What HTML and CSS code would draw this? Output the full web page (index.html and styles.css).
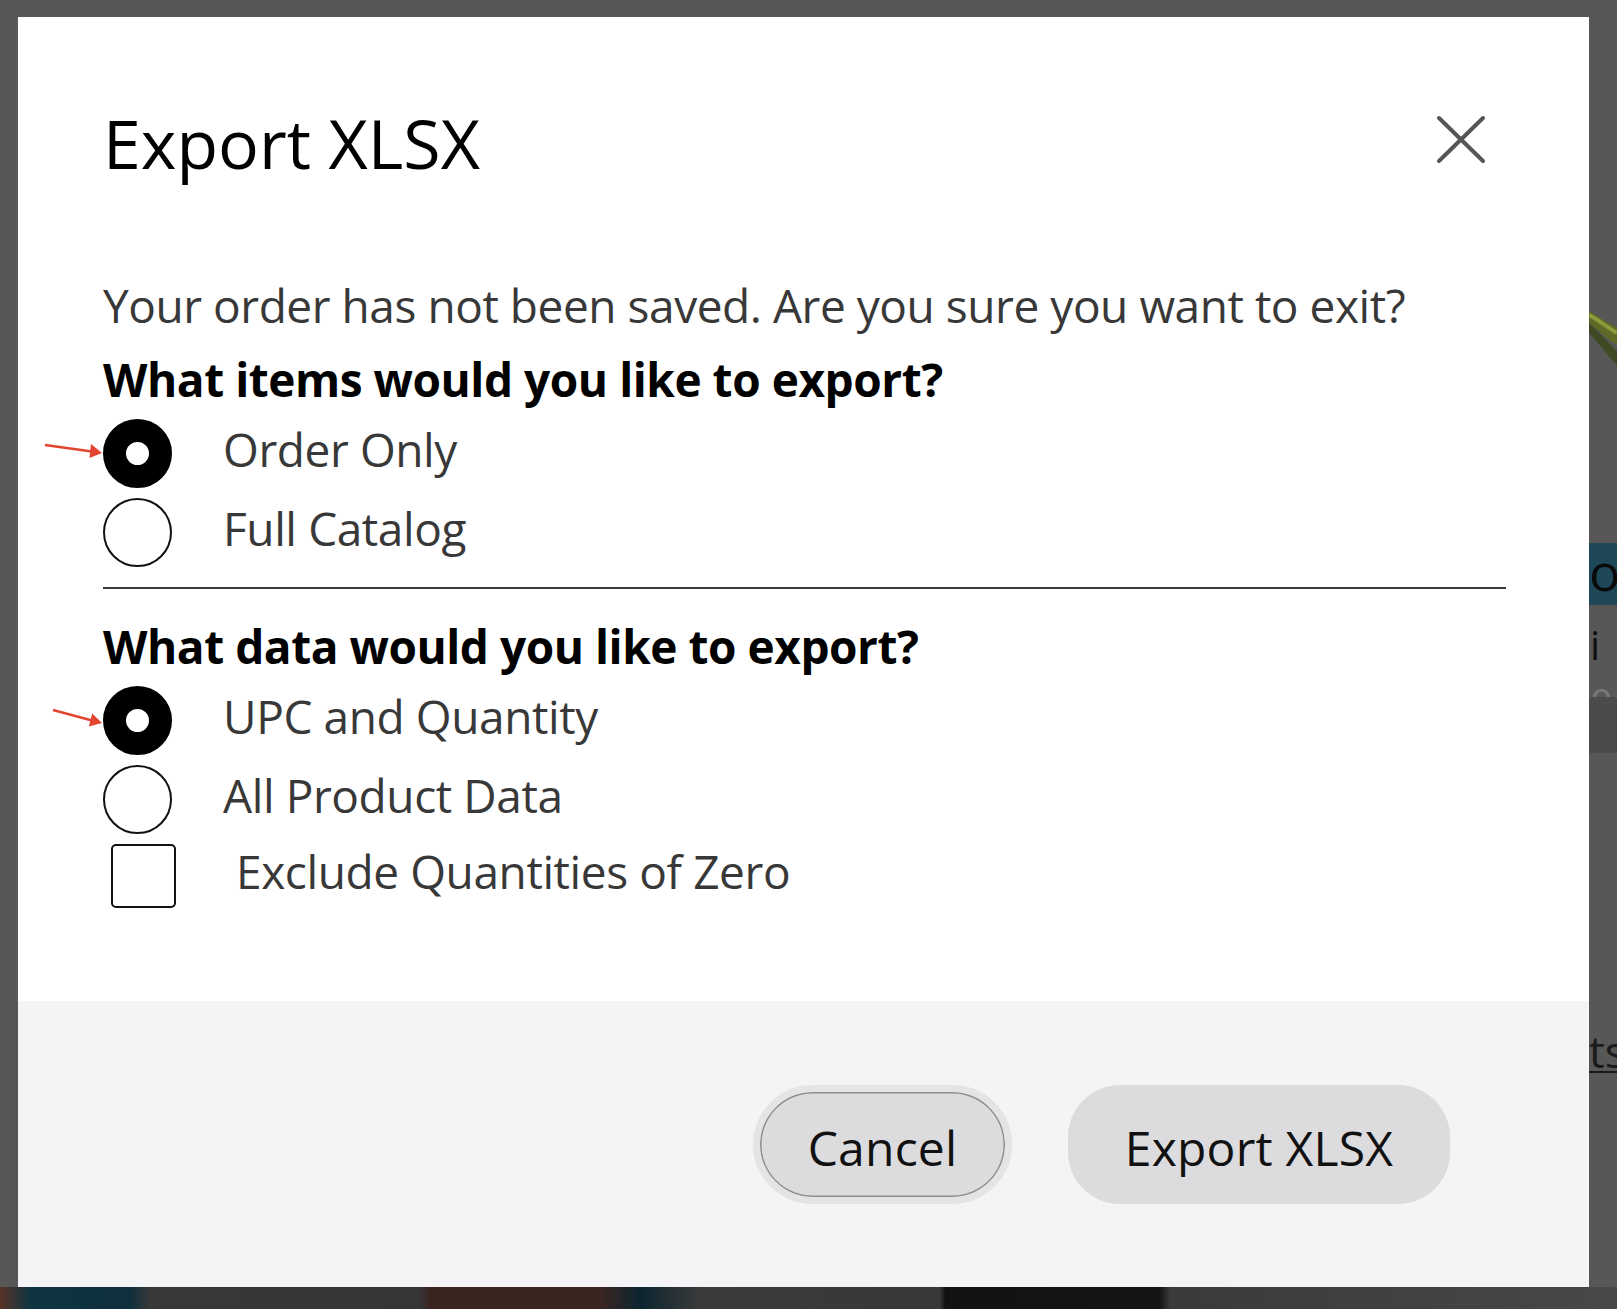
FILE: index.html
```html
<!DOCTYPE html>
<html lang="en">
<head>
<meta charset="utf-8">
<title>Export XLSX</title>
<link rel="stylesheet" href="styles.css">
</head>
<body>
<div class="screen">
  <div class="dialog">
    <div class="dialog-main">
      <div class="header">
        <h1 class="title">Export XLSX</h1>
        <button class="close" aria-label="Close">
          <svg width="52" height="52" viewBox="0 0 52 52"><path d="M4 4 L48 47 M48 4 L4 47" stroke="#555" stroke-width="4" stroke-linecap="round" fill="none"/></svg>
        </button>
      </div>
      <p class="message">Your order has not been saved. Are you sure you want to exit?</p>
      <h2 class="question">What items would you like to export?</h2>
      <div class="option"><span class="radio checked"></span><span class="label">Order Only</span></div>
      <div class="option"><span class="radio"></span><span class="label">Full Catalog</span></div>
      <hr class="divider">
      <h2 class="question q2">What data would you like to export?</h2>
      <div class="option"><span class="radio checked"></span><span class="label">UPC and Quantity</span></div>
      <div class="option"><span class="radio"></span><span class="label">All Product Data</span></div>
      <div class="option option-cb"><span class="checkbox"></span><span class="label cb-label">Exclude Quantities of Zero</span></div>
    </div>
    <div class="footer">
      <button class="btn btn-cancel">Cancel</button>
      <button class="btn btn-export">Export XLSX</button>
    </div>
  </div>
  <div class="edge">
    <svg class="leaf" width="28" height="90" viewBox="0 0 28 90"><path d="M0 6 C8 10 18 18 28 22 L28 40 C18 34 8 24 0 18 Z" fill="#5c6a26"/><path d="M0 10 C8 14 18 22 28 28" stroke="#8c9a3c" stroke-width="4" fill="none"/><path d="M0 18 C8 26 18 36 28 46 L28 60 C18 50 8 36 0 28 Z" fill="#3f4a24"/></svg>
    <div class="band">o</div>
    <div class="frag">i</div>
    <div class="frag faint">0(</div>
    <div class="dark-band"></div>
    <div class="link">ts</div>
  </div>
</div>
<svg class="arrows" width="120" height="760" viewBox="0 0 120 760">
  <path d="M45 445 L92 451.5" stroke="#e2452f" stroke-width="2.5" fill="none"/>
  <path d="M102 453 L89.5 458 L91 444 Z" fill="#e2452f"/>
  <path d="M53 710 L92 720.5" stroke="#e2452f" stroke-width="2.5" fill="none"/>
  <path d="M102 723 L88.9 726.5 L92.2 713.5 Z" fill="#e2452f"/>
</svg>
</body>
</html>
```
FILE: styles.css
```css
html, body {
  margin: 0;
  padding: 0;
}
body {
  width: 1617px;
  height: 1309px;
  overflow: hidden;
  background-color: #575757;
  background-image:
    linear-gradient(to right, #5a3328 0, #0f3442 30px, #0e2f3c 130px, #383838 150px, #353535 420px, #3a2420 430px, #3b2521 600px, #0d2530 640px, #3a3a3a 700px, #383838 940px, #121212 945px, #151515 1160px, #3a3a3a 1170px, #484848 1617px);
  background-size: 1617px 22px;
  background-position: 0 1287px;
  background-repeat: no-repeat;
  font-family: "Open Sans", "Noto Sans", sans-serif;
  position: relative;
}
.screen {
  display: flex;
  align-items: flex-start;
}
.dialog {
  margin: 17px 0 0 18px;
  width: 1571px;
  height: 1270px;
  background: #ffffff;
  display: flex;
  flex-direction: column;
  flex: none;
}
.dialog-main {
  flex: 1;
  padding: 86px 83px 0 85px;
  color: #333;
}
.header {
  display: flex;
  align-items: center;
  justify-content: space-between;
  height: 80px;
}
.title {
  margin: 0;
  font-size: 68px;
  font-weight: 400;
  line-height: 80px;
  color: #000;
}
.close {
  width: 52px;
  height: 52px;
  padding: 0;
  margin: 0 19px 6px 0;
  border: 0;
  background: transparent;
  display: flex;
}
.message {
  margin: 85px 0 0;
  font-size: 46px;
  letter-spacing: -0.45px;
  line-height: 74px;
  color: #383838;
  white-space: nowrap;
}
.question {
  margin: 2px 0 0;
  font-size: 46px;
  letter-spacing: -0.45px;
  line-height: 70px;
  font-weight: 700;
  color: #000;
  white-space: nowrap;
}
.q2 {
  margin-top: 22px;
}
.option {
  display: flex;
  align-items: center;
  height: 79px;
}
.option-cb {
  margin-top: -3px;
}
.radio {
  width: 69px;
  height: 69px;
  box-sizing: border-box;
  border: 2px solid #111;
  border-radius: 50%;
  background: #fff;
  flex: none;
}
.radio.checked {
  border: 23px solid #000;
  background: #fff;
}
.checkbox {
  width: 65px;
  height: 64px;
  box-sizing: border-box;
  border: 2px solid #111;
  border-radius: 5px;
  margin-left: 8px;
  flex: none;
}
.label {
  margin-left: 51px;
  margin-bottom: 10px;
  font-size: 46px;
  letter-spacing: -0.4px;
  color: #383838;
  white-space: nowrap;
}
.cb-label {
  margin-left: 60px;
}
.divider {
  margin: 15px 0 0;
  border: 0;
  height: 2px;
  background: #3a3a3a;
}
.footer {
  height: 286px;
  background: #f4f4f6;
  display: flex;
  align-items: center;
  justify-content: flex-end;
  padding-right: 139px;
  gap: 56px;
}
.btn {
  height: 119px;
  box-sizing: border-box;
  border: 0;
  border-radius: 52px;
  background: #dcdcde;
  font-family: "Open Sans", "Noto Sans", sans-serif;
  font-size: 48px;
  letter-spacing: 0.2px;
  color: #111;
  padding: 7px 0 0;
  margin: 0;
}
.btn-cancel {
  width: 259px;
  border: 7px solid #e4e4e6;
  border-radius: 60px;
  box-shadow: inset 0 0 0 1.5px #8e8e8e;
}
.btn-export {
  width: 382px;
}
.edge {
  width: 28px;
  flex: none;
  display: flex;
  flex-direction: column;
  overflow: hidden;
  padding-top: 305px;
}
.leaf {
  display: block;
  flex: none;
}
.band {
  margin-top: 148px;
  height: 62px;
  background: #1e4758;
  color: #0a0a0a;
  font-size: 52px;
  line-height: 56px;
  padding-left: 0;
  white-space: nowrap;
}
.frag {
  height: 40px;
  font-size: 40px;
  line-height: 40px;
  color: #111;
  padding-left: 1px;
  margin-top: 20px;
}
.frag.faint {
  height: 20px;
  margin-top: 18px;
  color: #777;
  overflow: hidden;
}
.dark-band {
  height: 56px;
  margin-top: -6px;
  background: #4b4b4b;
}
.link {
  margin-top: 276px;
  font-size: 44px;
  line-height: 44px;
  color: #1a1a1a;
  text-decoration: underline;
  white-space: nowrap;
}
.arrows {
  position: absolute;
  left: 0;
  top: 0;
}
```
